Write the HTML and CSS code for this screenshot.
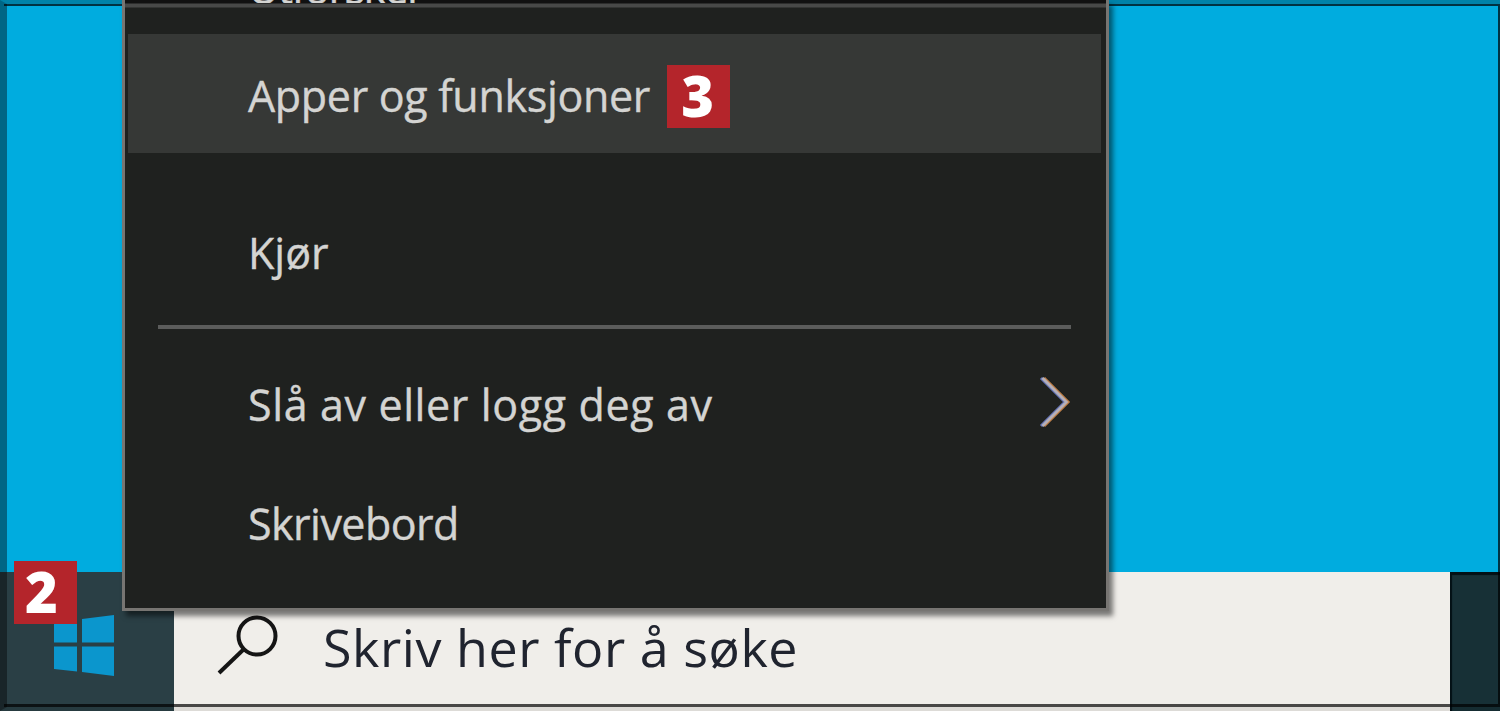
FILE: index.html
```html
<!DOCTYPE html>
<html lang="no">
<head>
  <meta charset="UTF-8">
  <title>Apper og funksjoner</title>
  <link rel="stylesheet" href="styles.css">
</head>
<body>

  <div class="desktop">
    <div class="wallpaper"></div>

    <div class="taskbar">
      <div class="start">
        <svg class="windows-logo" width="60" height="62" viewBox="0 0 60 62">
          <path d="M0 8 L23 4.500 V27.500 H0 Z M28 4 L60 0 V27.500 H28 Z M0 31.500 H23 V56.500 L0 54 Z M28 31.500 H60 V61 L28 57 Z"/>
        </svg>
      </div>
      <div class="search">
        <svg class="search-icon" width="64" height="64" viewBox="0 0 64 64">
          <circle cx="42" cy="22" r="18.500"/>
          <path d="M29 35 L4 59"/>
        </svg>
        <span class="search-text">Skriv her for å søke</span>
      </div>
      <div class="tray"></div>
    </div>

    <div class="frame"></div>
    <span class="badge badge-start">2</span>

    <!-- Win + X menu -->
    <div class="menu">
      <div class="item cut"><span class="label label-cut">Utforsker</span></div>
      <div class="item active">
        <span class="label label-apps">Apper og funksjoner</span>
        <span class="badge">3</span>
      </div>
      <div class="item run"><span class="label">Kjør</span></div>
      <div class="separator"></div>
      <div class="item power">
        <span class="label label-power">Slå av eller logg deg av</span>
        <svg class="chevron" width="34" height="56" viewBox="0 0 34 56">
          <path class="fringe-blue" d="M3 4 L27 28 L3 52"/>
          <path class="fringe-orange" d="M6 4 L30 28 L6 52"/>
          <path class="stroke" d="M4.500 4 L28.500 28 L4.500 52"/>
        </svg>
      </div>
      <div class="item"><span class="label label-desktop">Skrivebord</span></div>
    </div>
  </div>

</body>
</html>
```

FILE: styles.css
```css
body {
  margin: 0;
  font-family: "Open Sans", "Noto Sans", sans-serif;
}

.desktop {
  position: relative;
  display: flex;
  flex-direction: column;
  width: 1500px;
  height: 711px;
  overflow: hidden;
}

.wallpaper {
  flex: 1;
  background: #00acdf;
}

.taskbar {
  display: flex;
  height: 139px;
}

.start {
  box-sizing: border-box;
  width: 174px;
  padding: 43px 0 0 54px;
  background: #2a3f45;
}

.windows-logo {
  display: block;
  fill: #0b96cd;
}

.search {
  display: flex;
  width: 1276px;
  background: #f0eeea;
}

.search-icon {
  margin: 42px 0 0 41px;
  fill: none;
  stroke: #151515;
  stroke-width: 4;
}

.search-text {
  margin: 39px 0 0 44px;
  font-size: 52px;
  line-height: 72px;
  letter-spacing: 0.55px;
  white-space: nowrap;
  color: #20242f;
}

.tray {
  flex: 1;
  background: #173036;
  box-shadow: inset 2px 3px 1px #031015;
}

.badge {
  width: 63px;
  height: 63px;
  background: #b4252b;
  color: #fff;
  font-size: 56px;
  font-weight: 800;
  line-height: 61px;
  text-align: center;
  text-indent: -2px;
}

.badge-start {
  position: absolute;
  left: 14px;
  top: 561px;
  text-indent: -8px;
}

.menu {
  position: absolute;
  left: 122px;
  top: 0;
  box-sizing: border-box;
  width: 987px;
  height: 611px;
  border: solid #777572;
  border-width: 0 3px 3px;
  background: #1f211f;
  box-shadow: 4px 5px 5px rgba(0, 0, 0, 0.5);
}

.item {
  display: flex;
  align-items: center;
  box-sizing: border-box;
  height: 119px;
  padding-left: 123px;
}

.cut {
  height: 34px;
  align-items: flex-start;
  overflow: hidden;
  background: linear-gradient(#111 3px, #484948 4px 7px, #1f211f 8px);
}

/* only the feet of the letters reach into view */
.label-cut {
  height: 45px;
  margin-top: -42px;
  overflow: hidden;
  letter-spacing: -1.6px;
}

.active {
  width: 973px;
  margin-left: 3px;
  padding-left: 120px;
  background: #363836;
}

.active .badge {
  margin-left: 17px;
  margin-top: 6px;
}

.label {
  font-size: 43px;
  line-height: 60px;
  white-space: nowrap;
  color: #d4d4d2;
  -webkit-text-stroke: 0.4px #d4d4d2;
}

.label-apps {
  margin-top: 4px;
  letter-spacing: -0.32px;
}

.run {
  height: 172px;
  padding-top: 28px;
}

.separator {
  height: 4px;
  margin: 0 35px 0 33px;
  background: #5b5c5b;
}

.power {
  height: 135px;
  padding-top: 20px;
  padding-right: 34px;
}

.label-power {
  margin-top: -4px;
  letter-spacing: 0.62px;
}

.label-desktop {
  letter-spacing: -0.55px;
}

.chevron {
  margin-left: auto;
  margin-top: -10px;
  fill: none;
}

.fringe-blue {
  stroke: #6878b8;
  stroke-width: 3;
}

.fringe-orange {
  stroke: #c08048;
  stroke-width: 3;
}

.stroke {
  stroke: #b5b0b8;
  stroke-width: 2.5;
}

/* thin outline with shaded edges around the whole desktop */
.frame {
  position: absolute;
  inset: 0;
  border-style: solid;
  border-width: 4px 0 4px 7px;
  border-color: rgba(0, 0, 0, 0.24) transparent rgba(0, 0, 0, 0.08) rgba(0, 0, 0, 0.4);
}

.frame::before {
  content: "";
  position: absolute;
  inset: 0 0 0 -3px;
  border: solid rgba(0, 0, 0, 0.7);
  border-width: 2px 2px 3px 0;
}
```
